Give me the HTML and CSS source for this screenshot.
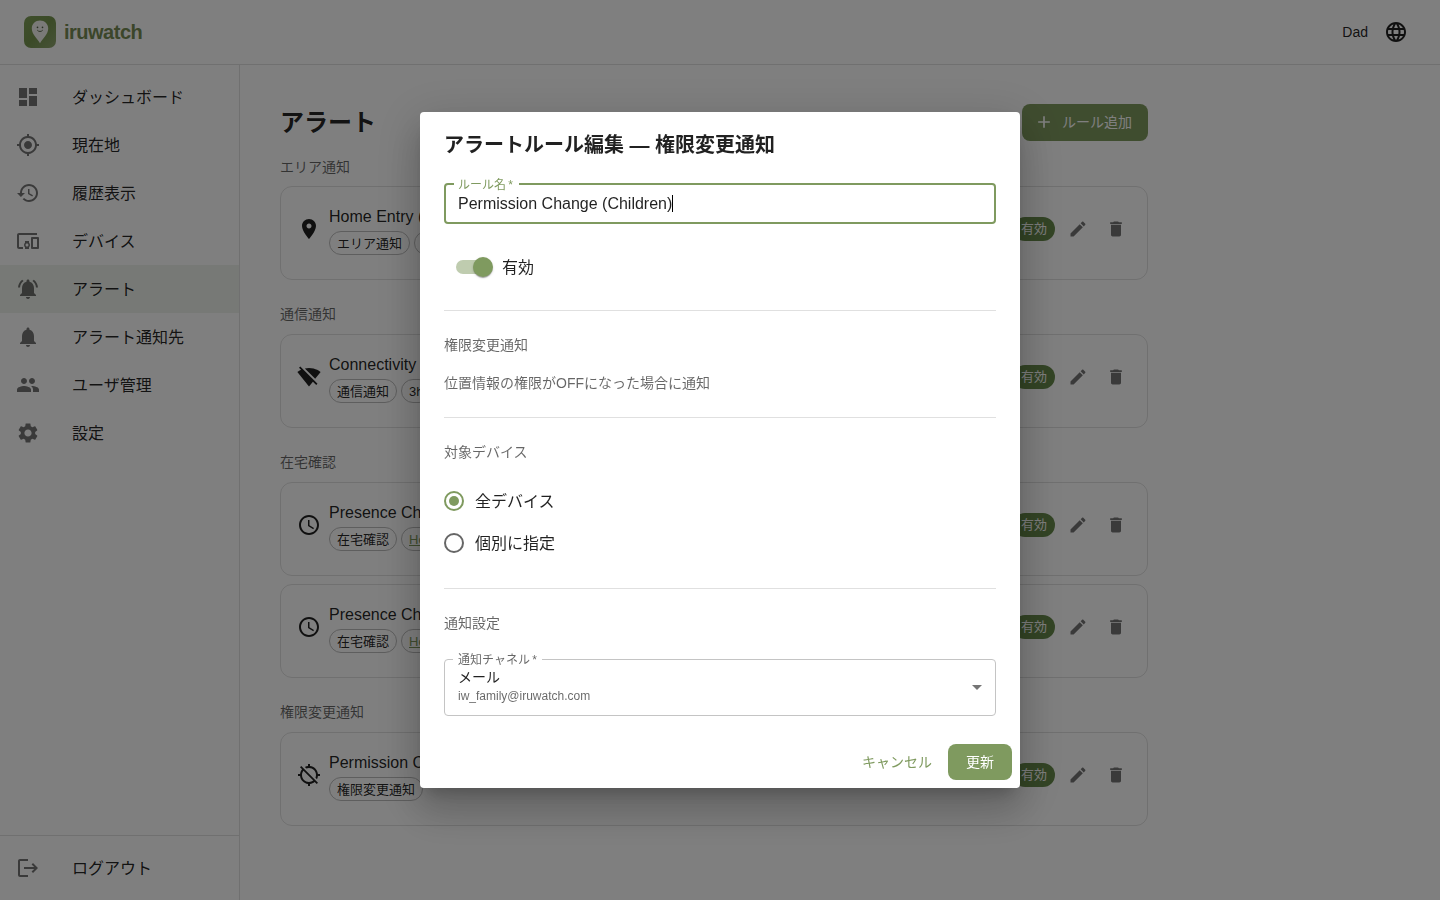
FILE: index.html
```
<!DOCTYPE html>
<html lang="ja">
<head>
  <meta charset="UTF-8">
  <meta name="viewport" content="width=device-width, initial-scale=1.0">
  <title>iruwatch</title>
  <link rel="stylesheet" href="styles.css">
</head>
<body>
  <svg class="sprite">
    <symbol id="pin" viewBox="0 0 24 24"><path d="M12 2C8.13 2 5 5.13 5 9c0 5.25 7 13 7 13s7-7.75 7-13c0-3.87-3.13-7-7-7zm0 9.5c-1.38 0-2.5-1.12-2.5-2.5s1.12-2.5 2.5-2.5 2.5 1.12 2.5 2.5-1.12 2.5-2.5 2.5z"/></symbol>
    <symbol id="clock" viewBox="0 0 24 24"><path d="M11.99 2C6.47 2 2 6.48 2 12s4.47 10 9.99 10C17.52 22 22 17.52 22 12S17.52 2 11.99 2zM12 20c-4.42 0-8-3.58-8-8s3.58-8 8-8 8 3.58 8 8-3.58 8-8 8zm.5-13H11v6l5.25 3.15.75-1.23-4.5-2.67z"/></symbol>
    <symbol id="edit" viewBox="0 0 24 24"><path d="M3 17.25V21h3.75L17.81 9.94l-3.75-3.75L3 17.25zM20.71 7.04c.39-.39.39-1.02 0-1.41l-2.34-2.34c-.39-.39-1.02-.39-1.41 0l-1.83 1.83 3.75 3.75 1.83-1.83z"/></symbol>
    <symbol id="delete" viewBox="0 0 24 24"><path d="M6 19c0 1.1.9 2 2 2h8c1.1 0 2-.9 2-2V7H6v12zM19 4h-3.5l-1-1h-5l-1 1H5v2h14V4z"/></symbol>
  </svg>

  <header class="header">
    <div class="logo">
      <svg class="logo-mark" viewBox="0 0 32 32">
        <defs>
          <linearGradient id="logoBg" x1="0" y1="0" x2="1" y2="1">
            <stop offset="0" stop-color="#7f9f58"/>
            <stop offset="0.5" stop-color="#76954f"/>
            <stop offset="1" stop-color="#90a670"/>
          </linearGradient>
        </defs>
        <rect width="32" height="32" rx="7" fill="url(#logoBg)"/>
        <path d="M16 4.6c-4.6 0-8.2 3.5-8.2 8 0 5.6 5 9.600 8.200 14.600 3.200-5 8.200-9 8.200-14.600 0-4.500-3.600-8-8.200-8z" fill="#f4f4f0"/>
        <circle cx="13.500" cy="11.400" r="0.800" fill="#4f5c42"/>
        <circle cx="18.500" cy="11.400" r="0.800" fill="#4f5c42"/>
        <path d="M13.300 14.200c1.400 1.700 4 1.700 5.400 0" fill="none" stroke="#4f5c42" stroke-width="0.900"/>
      </svg>
      <span class="logo-text">iruwatch</span>
    </div>
    <div class="user">
      <span>Dad</span>
      <svg class="icon" viewBox="0 0 24 24"><path d="M11.99 2C6.47 2 2 6.48 2 12s4.47 10 9.99 10C17.52 22 22 17.52 22 12S17.52 2 11.99 2zm6.93 6h-2.95c-.32-1.25-.78-2.45-1.38-3.56 1.84.63 3.37 1.91 4.33 3.56zM12 4.04c.83 1.2 1.48 2.53 1.91 3.96h-3.82c.43-1.43 1.08-2.76 1.91-3.96zM4.26 14C4.1 13.36 4 12.69 4 12s.1-1.36.26-2h3.38c-.08.66-.14 1.32-.14 2 0 .68.06 1.34.14 2H4.26zm.82 2h2.95c.32 1.25.78 2.45 1.38 3.56-1.84-.63-3.37-1.9-4.33-3.56zm2.95-8H5.08c.96-1.66 2.49-2.93 4.33-3.56C8.81 5.55 8.35 6.75 8.03 8zM12 19.96c-.83-1.2-1.48-2.53-1.91-3.96h3.82c-.43 1.43-1.08 2.76-1.91 3.96zM14.34 14H9.66c-.09-.66-.16-1.32-.16-2 0-.68.07-1.35.16-2h4.68c.09.65.16 1.32.16 2 0 .68-.07 1.34-.16 2zm.25 5.56c.6-1.11 1.06-2.31 1.38-3.56h2.95c-.96 1.65-2.49 2.93-4.33 3.56zM16.36 14c.08-.66.14-1.32.14-2 0-.68-.06-1.34-.14-2h3.38c.16.64.26 1.31.26 2s-.1 1.36-.26 2h-3.38z"/></svg>
    </div>
  </header>

  <div class="layout">
    <nav class="sidebar">
      <ul class="menu">
        <li class="menu-item"><svg class="icon" viewBox="0 0 24 24"><path d="M3 13h8V3H3v10zm0 8h8v-6H3v6zm10 0h8V11h-8v10zm0-18v6h8V3h-8z"/></svg><span class="label">ダッシュボード</span></li>
        <li class="menu-item"><svg class="icon" viewBox="0 0 24 24"><path d="M12 8c-2.210 0-4 1.790-4 4s1.790 4 4 4 4-1.790 4-4-1.790-4-4-4zm8.940 3c-.46-4.170-3.770-7.480-7.940-7.940V1h-2v2.060C6.830 3.520 3.520 6.830 3.060 11H1v2h2.060c.46 4.170 3.770 7.480 7.940 7.940V23h2v-2.060c4.170-.46 7.480-3.770 7.940-7.940H23v-2h-2.060zM12 19c-3.870 0-7-3.130-7-7s3.130-7 7-7 7 3.130 7 7-3.130 7-7 7z"/></svg><span class="label">現在地</span></li>
        <li class="menu-item"><svg class="icon" viewBox="0 0 24 24"><path d="M13 3c-4.970 0-9 4.030-9 9H1l3.890 3.890.07.14L9 12H6c0-3.870 3.130-7 7-7s7 3.130 7 7-3.130 7-7 7c-1.930 0-3.680-.79-4.940-2.060l-1.420 1.420C8.270 19.990 10.510 21 13 21c4.970 0 9-4.030 9-9s-4.030-9-9-9zm-1 5v5l4.280 2.540.72-1.210-3.500-2.080V8H12z"/></svg><span class="label">履歴表示</span></li>
        <li class="menu-item"><svg class="icon" viewBox="0 0 24 24"><path d="M3 6h18V4H3c-1.100 0-2 .9-2 2v12c0 1.100.9 2 2 2h4v-2H3V6zm10 6H9v1.780c-.61.55-1 1.330-1 2.220s.39 1.670 1 2.220V20h4v-1.780c.61-.55 1-1.340 1-2.220s-.39-1.670-1-2.220V12zm-2 5.500c-.83 0-1.500-.67-1.500-1.500s.67-1.500 1.500-1.500 1.500.67 1.500 1.500-.67 1.500-1.500 1.500zM22 8h-6c-.5 0-1 .5-1 1v10c0 .5.5 1 1 1h6c.5 0 1-.5 1-1V9c0-.5-.5-1-1-1zm-1 10h-4v-8h4v8z"/></svg><span class="label">デバイス</span></li>
        <li class="menu-item active"><svg class="icon" viewBox="0 0 24 24"><path d="M7.580 4.080L6.150 2.650C3.750 4.480 2.170 7.300 2.030 10.500h2c.15-2.650 1.510-4.970 3.550-6.420zm12.390 6.420h2c-.15-3.200-1.730-6.020-4.120-7.850l-1.420 1.430c2.020 1.450 3.390 3.770 3.540 6.420zM18 11c0-3.070-1.640-5.640-4.500-6.320V4c0-.83-.67-1.500-1.500-1.500s-1.500.67-1.500 1.500v.68C7.630 5.360 6 7.920 6 11v5l-2 2v1h16v-1l-2-2v-5zm-6 11c.14 0 .27-.01.4-.04.65-.14 1.180-.58 1.440-1.180.1-.24.15-.5.15-.78h-4c.01 1.100.9 2 2.010 2z"/></svg><span class="label">アラート</span></li>
        <li class="menu-item"><svg class="icon" viewBox="0 0 24 24"><path d="M12 22c1.100 0 2-.9 2-2h-4c0 1.100.89 2 2 2zm6-6v-5c0-3.070-1.640-5.640-4.500-6.320V4c0-.83-.67-1.500-1.500-1.500s-1.500.67-1.500 1.500v.68C7.630 5.360 6 7.920 6 11v5l-2 2v1h16v-1l-2-2z"/></svg><span class="label">アラート通知先</span></li>
        <li class="menu-item"><svg class="icon" viewBox="0 0 24 24"><path d="M16 11c1.660 0 2.990-1.340 2.990-3S17.660 5 16 5c-1.660 0-3 1.340-3 3s1.340 3 3 3zm-8 0c1.660 0 2.990-1.340 2.990-3S9.660 5 8 5C6.340 5 5 6.340 5 8s1.340 3 3 3zm0 2c-2.330 0-7 1.170-7 3.500V19h14v-2.500c0-2.330-4.670-3.500-7-3.500zm8 0c-.29 0-.62.02-.97.05 1.160.84 1.970 1.970 1.970 3.450V19h6v-2.500c0-2.330-4.670-3.500-7-3.500z"/></svg><span class="label">ユーザ管理</span></li>
        <li class="menu-item"><svg class="icon" viewBox="0 0 24 24"><path d="M19.140 12.940c.04-.3.06-.61.06-.94 0-.32-.02-.64-.07-.94l2.030-1.580c.18-.14.23-.41.12-.61l-1.920-3.320c-.12-.22-.37-.29-.59-.22l-2.390.96c-.5-.38-1.030-.7-1.620-.94l-.36-2.540c-.04-.24-.24-.41-.48-.41h-3.840c-.24 0-.43.17-.47.41l-.36 2.540c-.59.24-1.130.57-1.620.94l-2.390-.96c-.22-.08-.47 0-.59.22L2.740 8.870c-.12.21-.08.47.12.61l2.030 1.580c-.05.3-.09.63-.09.94s.02.64.07.94l-2.030 1.580c-.18.14-.23.41-.12.61l1.920 3.320c.12.22.37.29.59.22l2.390-.96c.5.38 1.030.7 1.620.94l.36 2.540c.05.24.24.41.48.41h3.840c.24 0 .44-.17.47-.41l.36-2.540c.59-.24 1.130-.56 1.620-.94l2.390.96c.22.08.47 0 .59-.22l1.920-3.320c.12-.22.07-.47-.12-.61l-2.010-1.580zM12 15.600c-1.980 0-3.600-1.620-3.600-3.600s1.620-3.600 3.600-3.600 3.600 1.620 3.600 3.600-1.620 3.600-3.600 3.600z"/></svg><span class="label">設定</span></li>
      </ul>
      <ul class="menu menu-bottom">
        <li class="menu-item"><svg class="icon" viewBox="0 0 24 24"><path d="m17 7-1.410 1.410L18.170 11H8v2h10.170l-2.580 2.580L17 17l5-5zM4 5h8V3H4c-1.100 0-2 .9-2 2v14c0 1.100.9 2 2 2h8v-2H4V5z"/></svg><span class="label">ログアウト</span></li>
      </ul>
    </nav>

    <main class="main">
      <div class="page-head">
        <h1>アラート</h1>
        <button class="btn btn-primary btn-add"><svg class="icon-sm" viewBox="0 0 24 24"><path d="M19 13h-6v6h-2v-6H5v-2h6V5h2v6h6v2z"/></svg>ルール追加</button>
      </div>

      <section class="group">
        <h2>エリア通知</h2>
        <div class="card">
          <svg class="icon"><use href="#pin"/></svg>
          <div class="card-body">
            <div class="card-title">Home Entry (Children)</div>
            <div class="chips"><span class="chip">エリア通知</span><span class="chip link">Home</span></div>
          </div>
          <span class="status">有効</span>
          <svg class="action"><use href="#edit"/></svg>
          <svg class="action"><use href="#delete"/></svg>
        </div>
      </section>

      <section class="group">
        <h2>通信通知</h2>
        <div class="card">
          <svg class="icon" viewBox="0 0 24 24"><path d="M23.640 7c-.45-.34-4.930-4-11.640-4-1.500 0-2.890.19-4.150.48L18.180 13.800 23.640 7zm-6.600 8.220L3.270 1.440 2 2.720l2.050 2.060C1.910 5.760.59 6.820.36 7l11.630 14.490.01.01.01-.01 3.900-4.860 3.320 3.320 1.270-1.270-3.460-3.460z"/></svg>
          <div class="card-body">
            <div class="card-title">Connectivity</div>
            <div class="chips"><span class="chip">通信通知</span><span class="chip">3h</span></div>
          </div>
          <span class="status">有効</span>
          <svg class="action"><use href="#edit"/></svg>
          <svg class="action"><use href="#delete"/></svg>
        </div>
      </section>

      <section class="group">
        <h2>在宅確認</h2>
        <div class="card">
          <svg class="icon"><use href="#clock"/></svg>
          <div class="card-body">
            <div class="card-title">Presence Check</div>
            <div class="chips"><span class="chip">在宅確認</span><span class="chip link">Home</span></div>
          </div>
          <span class="status">有効</span>
          <svg class="action"><use href="#edit"/></svg>
          <svg class="action"><use href="#delete"/></svg>
        </div>
        <div class="card">
          <svg class="icon"><use href="#clock"/></svg>
          <div class="card-body">
            <div class="card-title">Presence Check</div>
            <div class="chips"><span class="chip">在宅確認</span><span class="chip link">Home</span></div>
          </div>
          <span class="status">有効</span>
          <svg class="action"><use href="#edit"/></svg>
          <svg class="action"><use href="#delete"/></svg>
        </div>
      </section>

      <section class="group">
        <h2>権限変更通知</h2>
        <div class="card">
          <svg class="icon" viewBox="0 0 24 24"><path d="M20.940 11c-.46-4.170-3.770-7.480-7.940-7.940V1h-2v2.060c-1.130.12-2.190.46-3.160.97l1.500 1.500C10.160 5.190 11.060 5 12 5c3.870 0 7 3.130 7 7 0 .94-.19 1.840-.52 2.650l1.500 1.500c.5-.96.84-2.020.97-3.150H23v-2h-2.060zM3 4.270l2.040 2.040C3.970 7.620 3.250 9.230 3.060 11H1v2h2.060c.46 4.170 3.770 7.480 7.940 7.940V23h2v-2.060c1.770-.2 3.380-.91 4.690-1.980L19.730 21 21 19.730 4.270 3 3 4.270zm13.270 13.270C15.090 18.450 13.610 19 12 19c-3.870 0-7-3.130-7-7 0-1.610.55-3.090 1.460-4.270l9.810 9.810z"/></svg>
          <div class="card-body">
            <div class="card-title">Permission Change (Children)</div>
            <div class="chips"><span class="chip">権限変更通知</span></div>
          </div>
          <span class="status">有効</span>
          <svg class="action"><use href="#edit"/></svg>
          <svg class="action"><use href="#delete"/></svg>
        </div>
      </section>
    </main>
  </div>

  <div class="backdrop">
    <div class="dialog" role="dialog">
      <h2 class="dialog-title">アラートルール編集 — 権限変更通知</h2>
      <div class="dialog-content">
        <fieldset class="field focused">
          <legend>ルール名 *</legend>
          <div class="field-value">Permission Change (Children)<span class="caret"></span></div>
        </fieldset>
        <div class="switch-row"><span class="switch"><span class="thumb"></span></span><span class="label">有効</span></div>
        <hr>
        <h3>権限変更通知</h3>
        <p class="note">位置情報の権限がOFFになった場合に通知</p>
        <hr>
        <h3>対象デバイス</h3>
        <div class="radios">
          <div class="radio-row"><span class="radio checked"></span><span class="label">全デバイス</span></div>
          <div class="radio-row"><span class="radio"></span><span class="label">個別に指定</span></div>
        </div>
        <hr>
        <h3>通知設定</h3>
        <fieldset class="field select">
          <legend>通知チャネル *</legend>
          <div class="select-text">
            <div class="select-main">メール</div>
            <div class="select-sub">iw_family@iruwatch.com</div>
          </div>
          <svg class="arrow" viewBox="0 0 24 24"><path d="M7 10l5 5 5-5z"/></svg>
        </fieldset>
      </div>
      <div class="dialog-actions">
        <button class="btn btn-text">キャンセル</button>
        <button class="btn btn-primary">更新</button>
      </div>
    </div>
  </div>
</body>
</html>
```
FILE: styles.css
```
* {
  box-sizing: border-box;
}
body {
  margin: 0;
  height: 900px;
  overflow: hidden;
  background: #fff;
  color: rgba(0, 0, 0, 0.87);
  font-family: "Liberation Sans", "Noto Sans CJK JP", sans-serif;
  font-size: 16px;
  line-height: 24px;
}
h1, h2, h3, p, ul {
  margin: 0;
  padding: 0;
}
svg {
  display: block;
  flex-shrink: 0;
  fill: currentColor;
}
.sprite {
  display: none;
}
.icon {
  width: 24px;
  height: 24px;
}
.label {
  padding-top: 2px;
}

/* header */
.header {
  display: flex;
  align-items: center;
  justify-content: space-between;
  height: 65px;
  padding: 0 32px 1px 24px;
  border-bottom: 1px solid rgba(0, 0, 0, 0.12);
}
.logo {
  display: flex;
  align-items: center;
  gap: 8px;
}
.logo-mark {
  width: 32px;
  height: 32px;
}
.logo-text {
  color: #768c55;
  font-size: 20px;
  font-weight: bold;
  letter-spacing: -0.5px;
}
.user {
  display: flex;
  align-items: center;
  gap: 16px;
  font-size: 14px;
}

/* sidebar */
.layout {
  display: flex;
  height: 835px;
}
.sidebar {
  display: flex;
  flex-direction: column;
  justify-content: space-between;
  width: 240px;
  border-right: 1px solid rgba(0, 0, 0, 0.12);
}
.menu {
  list-style: none;
  padding: 8px 0;
}
.menu-bottom {
  border-top: 1px solid rgba(0, 0, 0, 0.12);
}
.menu-item {
  display: flex;
  align-items: center;
  gap: 32px;
  height: 48px;
  padding: 0 16px;
}
.menu-item .icon {
  color: rgba(0, 0, 0, 0.54);
}
.menu-item.active {
  background: rgba(127, 154, 95, 0.12);
}

/* alert rules */
.main {
  width: 948px;
  padding: 39px 40px 0;
}
.page-head {
  display: flex;
  align-items: center;
  justify-content: space-between;
  height: 37px;
  margin-bottom: 16px;
}
.page-head h1 {
  font-size: 24px;
  line-height: 32px;
}
.btn {
  display: flex;
  align-items: center;
  height: 36px;
  padding: 0 18px;
  border: 0;
  border-radius: 8px;
  background: none;
  font: 14px/24px "Liberation Sans", "Noto Sans CJK JP", sans-serif;
}
.btn-primary {
  background: #7f9a5f;
  color: #fff;
}
.btn-add {
  height: 37px;
  padding: 0 16px 1px 12px;
  gap: 8px;
}
.icon-sm {
  width: 20px;
  height: 20px;
}
.group {
  display: flex;
  flex-direction: column;
  gap: 8px;
  margin-bottom: 24px;
}
.group h2,
.dialog h3 {
  color: rgba(0, 0, 0, 0.6);
  font-size: 14px;
  font-weight: normal;
  line-height: 21px;
}
.group + .group h2 {
  padding-bottom: 1px;
}
.card {
  display: flex;
  align-items: center;
  height: 94px;
  padding: 16px 21px 24px 16px;
  border: 1px solid rgba(0, 0, 0, 0.12);
  border-radius: 12px;
}
.card-body {
  flex: 1;
  margin-left: 8px;
}
.card-title {
  margin-bottom: 2px;
  padding-top: 2px;
}
.chips {
  display: flex;
  gap: 4px;
}
.chip {
  height: 24px;
  padding: 0 7px;
  border: 1px solid #bdbdbd;
  border-radius: 12px;
  font-size: 13px;
  line-height: 23px;
}
.chip.link {
  color: #7f9a5f;
  text-decoration: underline;
}
.status {
  height: 24px;
  padding: 0 8px;
  border-radius: 12px;
  background: #678a4b;
  color: #fff;
  font-size: 13px;
}
.action {
  width: 20px;
  height: 20px;
  margin-left: 18px;
  color: rgba(0, 0, 0, 0.54);
}
.status + .action {
  margin-left: 13px;
}

/* dialog */
.backdrop {
  position: fixed;
  inset: 0;
  display: flex;
  align-items: center;
  justify-content: center;
  background: rgba(0, 0, 0, 0.5);
}
.dialog {
  display: flex;
  flex-direction: column;
  width: 600px;
  height: 676px;
  border-radius: 4px;
  background: #fff;
  box-shadow: 0 11px 15px -7px rgba(0, 0, 0, 0.2), 0 24px 38px 3px rgba(0, 0, 0, 0.14), 0 9px 46px 8px rgba(0, 0, 0, 0.12);
}
.dialog-title {
  padding: 17px 24px 15px;
  font-size: 20px;
  line-height: 32px;
}
.dialog-content {
  flex: 1;
  padding: 0 24px;
}
.dialog hr {
  height: 1px;
  margin: 0;
  border: 0;
  background: rgba(0, 0, 0, 0.12);
}
.dialog h3 {
  margin-top: 24px;
}
.note {
  margin: 16px 0 23px;
  color: rgba(0, 0, 0, 0.6);
  font-size: 14px;
  line-height: 22px;
}
.field {
  display: flex;
  margin: 0;
  padding: 0 12px;
  border: 1px solid #c4c4c4;
  border-radius: 4px;
}
.field legend {
  margin-left: -4px;
  padding: 2px 5px 0;
  color: rgba(0, 0, 0, 0.6);
  font-size: 12px;
  line-height: 14px;
  word-spacing: -1px;
}
.field.focused {
  height: 48px;
  border: 2px solid #7f9a5f;
}
.field.focused legend {
  padding: 2px 6px 0 4px;
  color: #7f9a5f;
}
.field-value {
  display: flex;
  align-items: center;
  align-self: flex-start;
  line-height: 23px;
}
.caret {
  width: 1px;
  height: 17px;
  background: #000;
}
.switch-row {
  display: flex;
  align-items: center;
  gap: 12px;
  height: 38px;
  margin: 24px 0;
  padding-left: 12px;
}
.switch {
  display: flex;
  align-items: center;
  width: 34px;
  height: 14px;
  border-radius: 7px;
  background: #bfccaf;
}
.thumb {
  flex-shrink: 0;
  width: 20px;
  height: 20px;
  margin-left: 17px;
  border-radius: 50%;
  background: #7f9a5f;
  box-shadow: 0 2px 1px -1px rgba(0, 0, 0, 0.2), 0 1px 1px rgba(0, 0, 0, 0.14), 0 1px 3px rgba(0, 0, 0, 0.12);
}
.radios {
  margin: 17px 0 24px;
}
.radio-row {
  display: flex;
  align-items: center;
  gap: 11px;
  height: 42px;
}
.radio {
  width: 20px;
  height: 20px;
  border: 2px solid rgba(0, 0, 0, 0.6);
  border-radius: 50%;
}
.radio.checked {
  padding: 3px;
  border-color: #7f9a5f;
  background: #7f9a5f content-box;
}
.select {
  height: 65px;
  margin-top: 17px;
  padding: 0 13px;
}
.select legend {
  margin-left: -5px;
}
.select-text {
  flex: 1;
}
.select-main {
  font-size: 14px;
  line-height: 20px;
}
.select-sub {
  color: rgba(0, 0, 0, 0.6);
  font-size: 12px;
  line-height: 18px;
}
.arrow {
  width: 24px;
  height: 24px;
  margin: 8px -7px 0 0;
  color: rgba(0, 0, 0, 0.54);
}
.dialog-actions {
  display: flex;
  justify-content: flex-end;
  gap: 8px;
  padding: 8px;
}
.btn-text {
  padding: 0 8px;
  color: #7f9a5f;
}
```
